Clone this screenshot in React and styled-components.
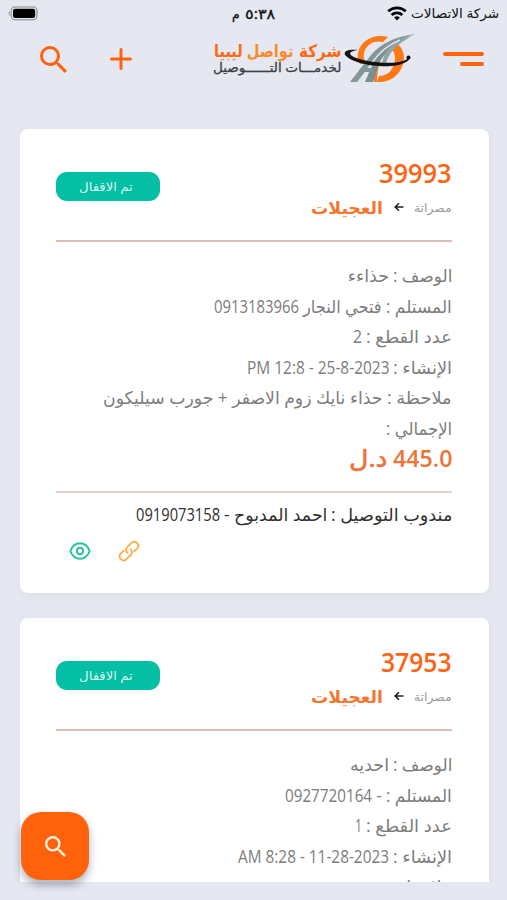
import React, { useLayoutEffect, useRef, useState } from 'react';
import styled, { createGlobalStyle } from 'styled-components';

const GlobalStyle = createGlobalStyle`
  * { box-sizing: border-box; }
  body {
    margin: 0;
    background: #e5e8f0;
    font-family: "Open Sans", "DejaVu Sans", sans-serif;
    overflow: hidden;
  }
`;

const Screen = styled.div`
  direction: rtl;
  display: flex;
  flex-direction: column;
  width: 507px;
  height: 900px;
  overflow: hidden;
  background: #e5e8f0;
`;

const FitBox = styled.span`
  display: inline-block;
  flex: none;
  width: ${(props) => props.$width}px;
  white-space: nowrap;
`;

const FitInner = styled.span`
  display: inline-block;
  transform-origin: right center;
`;

const StatusBar = styled.div`
  display: grid;
  grid-template-columns: 1fr auto 1fr;
  align-items: center;
  height: 27px;
  padding: 0 8px;
  color: #111;
  font-size: 13px;
  line-height: 27px;
`;

const Carrier = styled.div`
  display: flex;
  align-items: center;
  gap: 4px;
`;

const Clock = styled.div`
  display: flex;
  gap: 5px;
  font-size: 14px;
  -webkit-text-stroke: 0.3px #111;
`;

const BatterySlot = styled.div`
  display: flex;
  justify-content: flex-end;
`;

const Header = styled.header`
  display: flex;
  align-items: center;
  height: 64px;
  padding: 0 23px 0 40px;
`;

const MenuButton = styled.button`
  display: flex;
  flex-direction: column;
  gap: 6px;
  align-items: flex-start;
  width: 41px;
  padding: 0;
  margin-left: 26px;
  border: none;
  background: transparent;
`;

const MenuLine = styled.span`
  width: ${(props) => props.$width}px;
  height: 4px;
  border-radius: 2px;
  background: #ff620f;
`;

const Brand = styled.div`
  display: flex;
  align-items: center;
  gap: 2px;
`;

const BrandText = styled.div`
  display: flex;
  flex-direction: column;
`;

const BrandName = styled.div`
  display: flex;
  gap: 5px;
  height: 19px;
  line-height: 17px;
  font-size: 17px;
  font-weight: 700;
  color: #ff6a13;
`;

const BrandTagline = styled.div`
  height: 15px;
  line-height: 14px;
  font-size: 12.5px;
  color: #3c4043;
  -webkit-text-stroke: 0.3px #3c4043;
`;

const Tint = styled.span`
  color: ${(props) => props.$color};
`;

const HeaderActions = styled.div`
  display: flex;
  align-items: center;
  gap: 43px;
  margin-right: auto;
`;

const OrderList = styled.main`
  display: flex;
  flex-direction: column;
  gap: 25px;
  height: 791px;
  padding: 38px 18px 0 20px;
  overflow: hidden;
`;

const Card = styled.article`
  flex: none;
  width: 469px;
  height: 464px;
  padding: 28px 37px 0 36px;
  border-radius: 8px;
  background: #fff;
  box-shadow: 0 3px 8px rgba(60, 70, 90, 0.05);
`;

const CardHead = styled.div`
  display: flex;
  justify-content: space-between;
  height: 83px;
`;

const OrderNumber = styled.div`
  height: 34px;
  line-height: 32px;
  font-size: 27.5px;
  font-weight: 600;
  color: #fb6413;
`;

const Route = styled.div`
  display: flex;
  align-items: center;
  height: 34px;
  line-height: 32px;
`;

const FromCity = styled.span`
  font-size: 12px;
  color: #999;
`;

const ToCity = styled.span`
  font-size: 17px;
  font-weight: 700;
  color: #f6762f;
`;

const RouteArrow = styled.svg`
  margin: 0 10px 2px 11px;
`;

const Badge = styled.div`
  width: 104px;
  height: 29px;
  margin-top: 15px;
  padding-right: 2px;
  border-radius: 11px;
  background: #05bfa5;
  color: #d9f8f2;
  font-size: 12px;
  line-height: 29px;
  text-align: center;
`;

const BadgeLabel = styled.div`
  padding-left: 2px;
`;

const Rule = styled.div`
  height: 2px;
  background: ${(props) => props.$color};
`;

const Details = styled.div`
  padding-top: 18px;
`;

const DetailRow = styled.div`
  display: flex;
  align-items: baseline;
  gap: 4px;
  height: 30.5px;
  line-height: 30px;
  font-size: 17.5px;
  color: ${(props) => props.$color || '#7d7d7d'};
`;

const Price = styled.div`
  display: flex;
  align-items: baseline;
  gap: 6px;
  height: 48px;
  line-height: 29px;
  font-size: 24px;
  font-weight: 600;
  color: #ec7436;
`;

const Currency = styled.span`
  font-weight: 400;
  -webkit-text-stroke: 0.6px #ec7436;
`;

const Driver = styled.div`
  padding-top: 6px;
`;

const CardActions = styled.div`
  display: flex;
  justify-content: flex-end;
  gap: 27px;
  padding: 10px 0 0 13px;
`;

const Fab = styled.button`
  position: fixed;
  left: 21px;
  top: 812px;
  display: flex;
  align-items: center;
  justify-content: center;
  width: 68px;
  height: 68px;
  padding: 0;
  border: none;
  border-radius: 20px;
  background: #ff620a;
  box-shadow: 0 5px 9px rgba(40, 50, 70, 0.38);
`;

// squeezes or stretches a run of text so it fills the given width
function Fit({ width, dir, children }) {
  const ref = useRef(null);
  const [scale, setScale] = useState(1);

  useLayoutEffect(() => {
    setScale(width / ref.current.offsetWidth);
  }, [width, children]);

  return (
    <FitBox $width={width}>
      <FitInner ref={ref} dir={dir} style={{ transform: `scaleX(${scale})` }}>{children}</FitInner>
    </FitBox>
  );
}

const SearchIcon = ({ size, color }) => (
  <svg width={size} height={size} viewBox="3 3 17.5 17.5" fill={color}>
    <path d="M15.5 14h-.79l-.28-.27A6.47 6.47 0 0 0 16 9.5 6.5 6.5 0 1 0 9.5 16c1.61 0 3.09-.59 4.23-1.57l.27.28v.79l5 4.99L20.49 19l-4.99-5zm-6 0C7.01 14 5 11.99 5 9.5S7.01 5 9.5 5 14 7.01 14 9.5 11.99 14 9.5 14z" />
  </svg>
);

const PlusIcon = () => (
  <svg width="22" height="22" viewBox="0 0 22 22" stroke="#ff620f" strokeWidth="3" strokeLinecap="round">
    <path d="M11 1.5v19M1.5 11h19" />
  </svg>
);

const WifiIcon = () => (
  <svg width="20" height="15" viewBox="0 0 20 15" fill="none" stroke="#080808" strokeWidth="2.7">
    <path d="M1.2 5.3C6.2.6 13.8.6 18.8 5.3" />
    <path d="M4.6 8.9c3-2.8 7.8-2.8 10.8 0" />
    <path d="M10 14.5 7.1 11.4c1.7-1.4 4.1-1.4 5.8 0z" fill="#080808" stroke="none" />
  </svg>
);

const BatteryIcon = () => (
  <svg width="30" height="15" viewBox="0 0 30 15">
    <path d="M1.8 5.2C.2 5.8.2 9 1.8 9.7z" fill="#999ca2" />
    <rect x="3.2" y=".9" width="25.8" height="12.9" rx="4" fill="none" stroke="#a4a6ab" strokeWidth="1.5" />
    <rect x="5" y="2.8" width="22.2" height="9.2" rx="2.3" />
  </svg>
);

const LogoMark = () => (
  <svg width="74" height="52" viewBox="0 0 74 52">
    <path d="M45 4C31 0 17 8 15 20c-1 4 0 8 2 11h7c-4-5-4-10-2-14 3-7 11-10 18-8z" fill="#ff7816" />
    <path d="M53 10c8 5 10 15 6 24-4 10-14 16-25 15l2-6c8 0 13-5 15-12 2-6 1-12-3-15z" fill="#ff7816" />
    <path d="M43 18c-6 7-9 18-9 31h-3l-1-9 5-12z" fill="#ff7816" />
    <path d="M73 1C54 3 38 10 28 22L7 49h7l18-23C42 14 55 6 73 1z" fill="#83979a" />
    <path d="M71 2C56 7 44 17 37 28l-7 21h-8l9-21C39 15 54 6 71 2z" fill="#788f92" />
    <path d="M68 4C55 10 47 18 43 30l-4 0c2-11 9-20 20-24z" fill="#94a4a6" />
    <path d="M57 7C44 12 35 21 28 31L16 49" stroke="#dfe6e8" strokeWidth="1.5" fill="none" />
    <path d="M22 35h9l-1.500 4H19z" fill="#83979a" />
    <path d="M15 17C4 16-1 19 3 23c9 9 45 14 58 7 5-2 7-5 5-7-1 3-3 4-6 5-12 4-41 1-51-5-4-3-1-5 6-6z" fill="#111" />
    <circle cx="65.500" cy="24.500" r="2" fill="#111" />
  </svg>
);

const ArrowIcon = () => (
  <RouteArrow width="10" height="10" viewBox="0 0 10 10" fill="none" stroke="#222" strokeWidth="1.6">
    <path d="M9.500 5H1.300M5 1.200 1.200 5 5 8.800" />
  </RouteArrow>
);

const LinkIcon = () => (
  <svg width="22" height="22" viewBox="0 0 22 22" fill="none" stroke="#ffad42" strokeWidth="1.8" strokeLinecap="round">
    <path d="M9.300 12.700c-1.700-1.900-1.500-4 0-5.500l4.300-4.400c3.600-3.600 9.100 1.800 5.600 5.500l-3 3" />
    <path d="M12.700 9.300c1.700 1.900 1.500 4 0 5.500l-4.300 4.400c-3.600 3.600-9.100-1.800-5.600-5.500l3-3" />
  </svg>
);

const EyeIcon = () => (
  <svg width="22" height="22" viewBox="0 0 22 22" fill="none" stroke="#21c2a4" strokeWidth="2">
    <path d="M1.300 11C3.300 6 7 3.200 11 3.200S18.700 6 20.700 11c-2 5-5.700 7.800-9.700 7.800S3.300 16 1.300 11z" strokeLinejoin="round" />
    <circle cx="11" cy="11" r="3.200" />
  </svg>
);

const orders = [
  {
    number: '39993',
    numberWidth: 73,
    rows: [
      [['الوصف :', 59], ['حذاءء', 41]],
      [['المستلم :', 66], ['فتحي النجار', 79], ['0913183966', 85, 'ltr']],
      [['عدد القطع :', 86], ['2', 9]],
      [['الإنشاء :', 59], ['PM 12:8 - 25-8-2023', 142, 'ltr']],
      [['ملاحظة :', 65], ['حذاء نايك زوم الاصفر + جورب سيليكون', 280]],
      [['الإجمالي :', 66]],
    ],
  },
  {
    number: '37953',
    numberWidth: 71,
    rows: [
      [['الوصف :', 59], ['احديه', 39]],
      [['المستلم :', 66], ['-', 6], ['0927720164', 87, 'ltr']],
      [['عدد القطع :', 86], ['1', 7]],
      [['الإنشاء :', 59], ['AM 8:28 - 11-28-2023', 151, 'ltr']],
      [['ملاحظة :', 65]],
      [['الإجمالي :', 66]],
    ],
  },
];

function Row({ parts, color }) {
  return (
    <DetailRow $color={color}>
      {parts.map(([text, width, dir]) => (
        <Fit key={text} width={width} dir={dir}>{text}</Fit>
      ))}
    </DetailRow>
  );
}

function OrderCard({ order }) {
  return (
    <Card>
      <CardHead>
        <div>
          <OrderNumber><Fit width={order.numberWidth}>{order.number}</Fit></OrderNumber>
          <Route>
            <FromCity><Fit width={38}>مصراتة</Fit></FromCity>
            <ArrowIcon />
            <ToCity><Fit width={72}>العجيلات</Fit></ToCity>
          </Route>
        </div>
        <Badge><BadgeLabel><Fit width={54}>تم الاقفال</Fit></BadgeLabel></Badge>
      </CardHead>
      <Rule $color="#d9bfb8" />
      <Details>
        {order.rows.map((parts) => <Row key={parts[0][0]} parts={parts} />)}
      </Details>
      <Price>
        <Fit width={59}>445.0</Fit>
        <Currency><Fit width={38}>د.ل</Fit></Currency>
      </Price>
      <Rule $color="#e4d0cf" />
      <Driver>
        <Row color="#303030" parts={[['مندوب التوصيل :', 121], ['احمد المدبوح -', 103], ['0919073158', 84, 'ltr']]} />
      </Driver>
      <CardActions>
        <LinkIcon />
        <EyeIcon />
      </CardActions>
    </Card>
  );
}

function App() {
  return (
    <Screen>
      <GlobalStyle />
      <StatusBar>
        <Carrier>
          <Fit width={88}>شركة الاتصالات</Fit>
          <WifiIcon />
        </Carrier>
        <Clock>
          <Fit width={30} dir="ltr">٥:٣٨</Fit>
          <Fit width={8}>م</Fit>
        </Clock>
        <BatterySlot><BatteryIcon /></BatterySlot>
      </StatusBar>
      <Header>
        <MenuButton>
          <MenuLine $width={41} />
          <MenuLine $width={24} />
        </MenuButton>
        <Brand>
          <LogoMark />
          <BrandText>
            <BrandName>
              <Fit width={43}>شركة</Fit>
              <Fit width={80}>
                <Tint $color="#fb8a2a">تواصل</Tint>
                {' '}
                <Tint $color="#ff6a13">ليبيا</Tint>
              </Fit>
            </BrandName>
            <BrandTagline><Fit width={128}>لخدمـــات التــــــوصيل</Fit></BrandTagline>
          </BrandText>
        </Brand>
        <HeaderActions>
          <PlusIcon />
          <SearchIcon size={27} color="#ff620f" />
        </HeaderActions>
      </Header>
      <OrderList>
        {orders.map((order) => <OrderCard key={order.number} order={order} />)}
      </OrderList>
      <Fab><SearchIcon size={21} color="#fff1df" /></Fab>
    </Screen>
  );
}

export default App;
